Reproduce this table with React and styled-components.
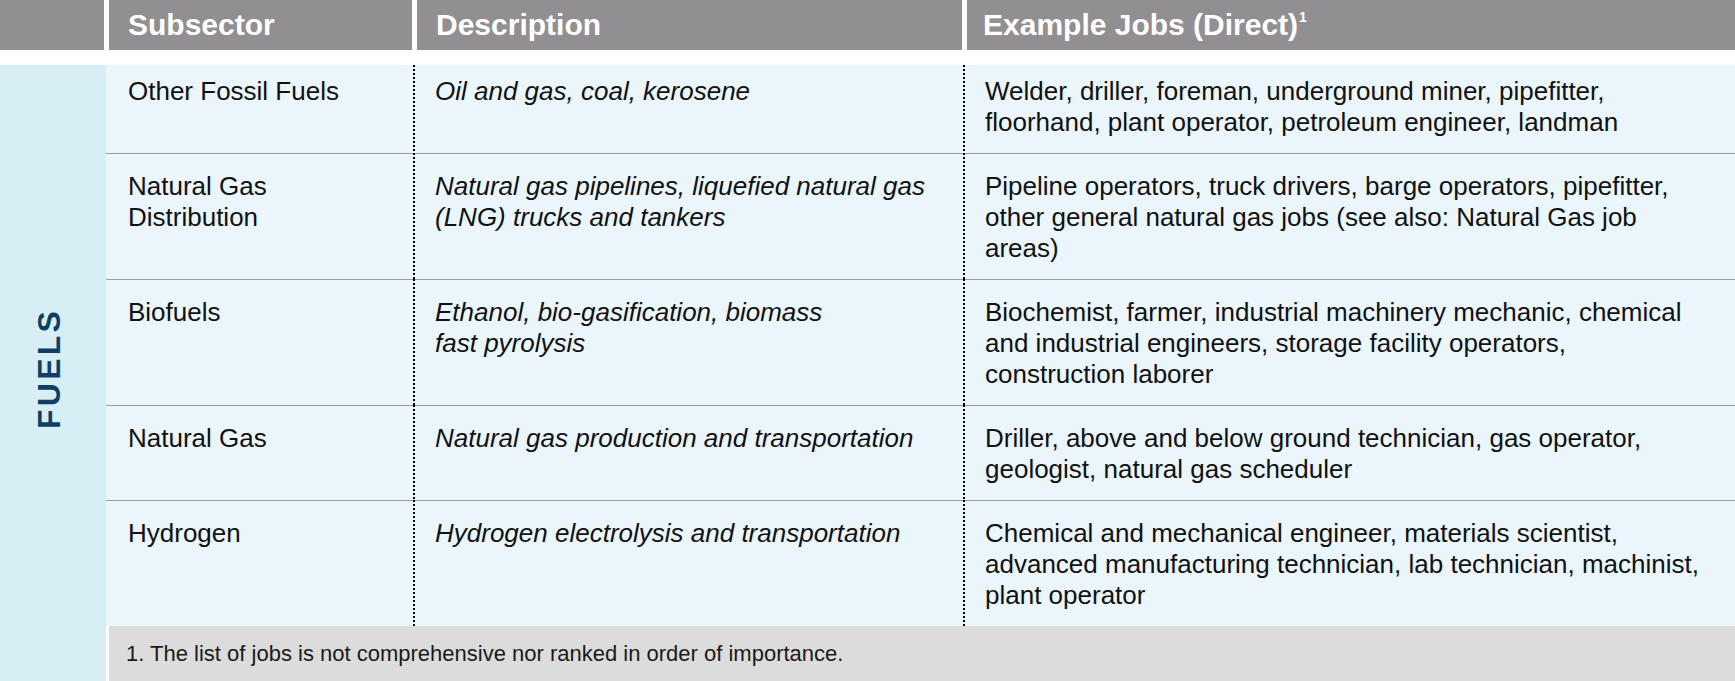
import React from "react";
import styled, { createGlobalStyle } from "styled-components";

const GlobalStyle = createGlobalStyle`
  html, body {
    margin: 0;
    padding: 0;
    background: #ffffff;
    font-family: "Liberation Sans", Arial, sans-serif;
  }
`;

const Page = styled.div`
  width: 1735px;
  height: 681px;
  overflow: hidden;
  background: #ffffff;
`;

const HeaderRow = styled.div`
  display: flex;
  gap: 5px;
  height: 50px;
  margin-bottom: 15px;
`;

const HeaderCell = styled.div`
  width: ${(p) => p.$w}px;
  flex: ${(p) => (p.$grow ? "1" : "none")};
  background: #918f92;
  color: #ffffff;
  font-weight: bold;
  font-size: 30px;
  line-height: 50px;
  padding-left: ${(p) => p.$pad || 0}px;
  box-sizing: border-box;
  white-space: nowrap;
`;

const Sup = styled.sup`
  font-size: 14px;
  vertical-align: top;
  line-height: 1;
  position: relative;
  top: 10px;
  margin-left: 1px;
`;

const Body = styled.div`
  display: grid;
  grid-template-columns: 106px 1fr;
  height: 616px;
`;

const SectorCell = styled.div`
  background: #d6eef4;
  display: flex;
  align-items: center;
  justify-content: center;
  padding-right: 8px;
`;

const SectorLabel = styled.div`
  writing-mode: vertical-rl;
  transform: rotate(180deg);
  color: #0e3f66;
  font-weight: bold;
  font-size: 32px;
  letter-spacing: 0.1em;
  padding-top: 10px;
`;

const TableArea = styled.div`
  display: flex;
  flex-direction: column;
`;

const Row = styled.div`
  display: grid;
  grid-template-columns: 307px 550px 1fr;
  background: #eaf6fb;
  border-top: ${(p) => (p.$first ? "none" : "1px solid #9c9c9c")};
`;

const Cell = styled.div`
  padding: 17px 8px 15px 22px;
  padding-top: ${(p) => (p.$first ? 11 : p.$dotted ? 18 : 17)}px;
  margin-top: ${(p) => (p.$dotted && !p.$first ? "-1px" : "0")};
  font-size: 26px;
  line-height: 31px;
  color: #111111;
  font-style: ${(p) => (p.$italic ? "italic" : "normal")};
  white-space: nowrap;
  background-image: ${(p) =>
    p.$dotted
      ? "linear-gradient(to bottom, #000000 50%, transparent 50%)"
      : "none"};
  background-size: 2px 4px;
  background-repeat: repeat-y;
  background-position: 0 0;
`;

const Footer = styled.div`
  flex: 1;
  background: #dcdcdc;
  border-left: 3px solid #ffffff;
  font-size: 22px;
  line-height: 55px;
  color: #1a1a1a;
  padding-left: 17px;
`;

const rows = [
  {
    sub: ["Other Fossil Fuels"],
    desc: ["Oil and gas, coal, kerosene"],
    jobs: [
      "Welder, driller, foreman, underground miner, pipefitter,",
      "floorhand, plant operator, petroleum engineer, landman",
    ],
  },
  {
    sub: ["Natural Gas", "Distribution"],
    desc: ["Natural gas pipelines, liquefied natural gas", "(LNG) trucks and tankers"],
    jobs: [
      "Pipeline operators, truck drivers, barge operators, pipefitter,",
      "other general natural gas jobs (see also: Natural Gas job",
      "areas)",
    ],
  },
  {
    sub: ["Biofuels"],
    desc: ["Ethanol, bio-gasification, biomass", "fast pyrolysis"],
    jobs: [
      "Biochemist, farmer, industrial machinery mechanic, chemical",
      "and industrial engineers, storage facility operators,",
      "construction laborer",
    ],
  },
  {
    sub: ["Natural Gas"],
    desc: ["Natural gas production and transportation"],
    jobs: [
      "Driller, above and below ground technician, gas operator,",
      "geologist, natural gas scheduler",
    ],
  },
  {
    sub: ["Hydrogen"],
    desc: ["Hydrogen electrolysis and transportation"],
    jobs: [
      "Chemical and mechanical engineer, materials scientist,",
      "advanced manufacturing technician, lab technician, machinist,",
      "plant operator",
    ],
  },
];

const Lines = ({ lines }) =>
  lines.map((l, i) => (
    <React.Fragment key={i}>
      {i > 0 && <br />}
      {l}
    </React.Fragment>
  ));

const App = () => {
  return (
    <Page>
      <GlobalStyle />
      <HeaderRow>
        <HeaderCell $w={104} />
        <HeaderCell $w={303} $pad={19}>
          Subsector
        </HeaderCell>
        <HeaderCell $w={545} $pad={19}>
          Description
        </HeaderCell>
        <HeaderCell $grow $pad={16}>
          Example Jobs (Direct)<Sup>1</Sup>
        </HeaderCell>
      </HeaderRow>

      <Body>
        <SectorCell>
          <SectorLabel>FUELS</SectorLabel>
        </SectorCell>
        <TableArea>
          {rows.map((r, i) => (
            <Row key={i} $first={i === 0}>
              <Cell $first={i === 0}>
                <Lines lines={r.sub} />
              </Cell>
              <Cell $first={i === 0} $italic $dotted>
                <Lines lines={r.desc} />
              </Cell>
              <Cell $first={i === 0} $dotted>
                <Lines lines={r.jobs} />
              </Cell>
            </Row>
          ))}
          <Footer>
            1. The list of jobs is not comprehensive nor ranked in order of importance.
          </Footer>
        </TableArea>
      </Body>
    </Page>
  );
};

export default App;
